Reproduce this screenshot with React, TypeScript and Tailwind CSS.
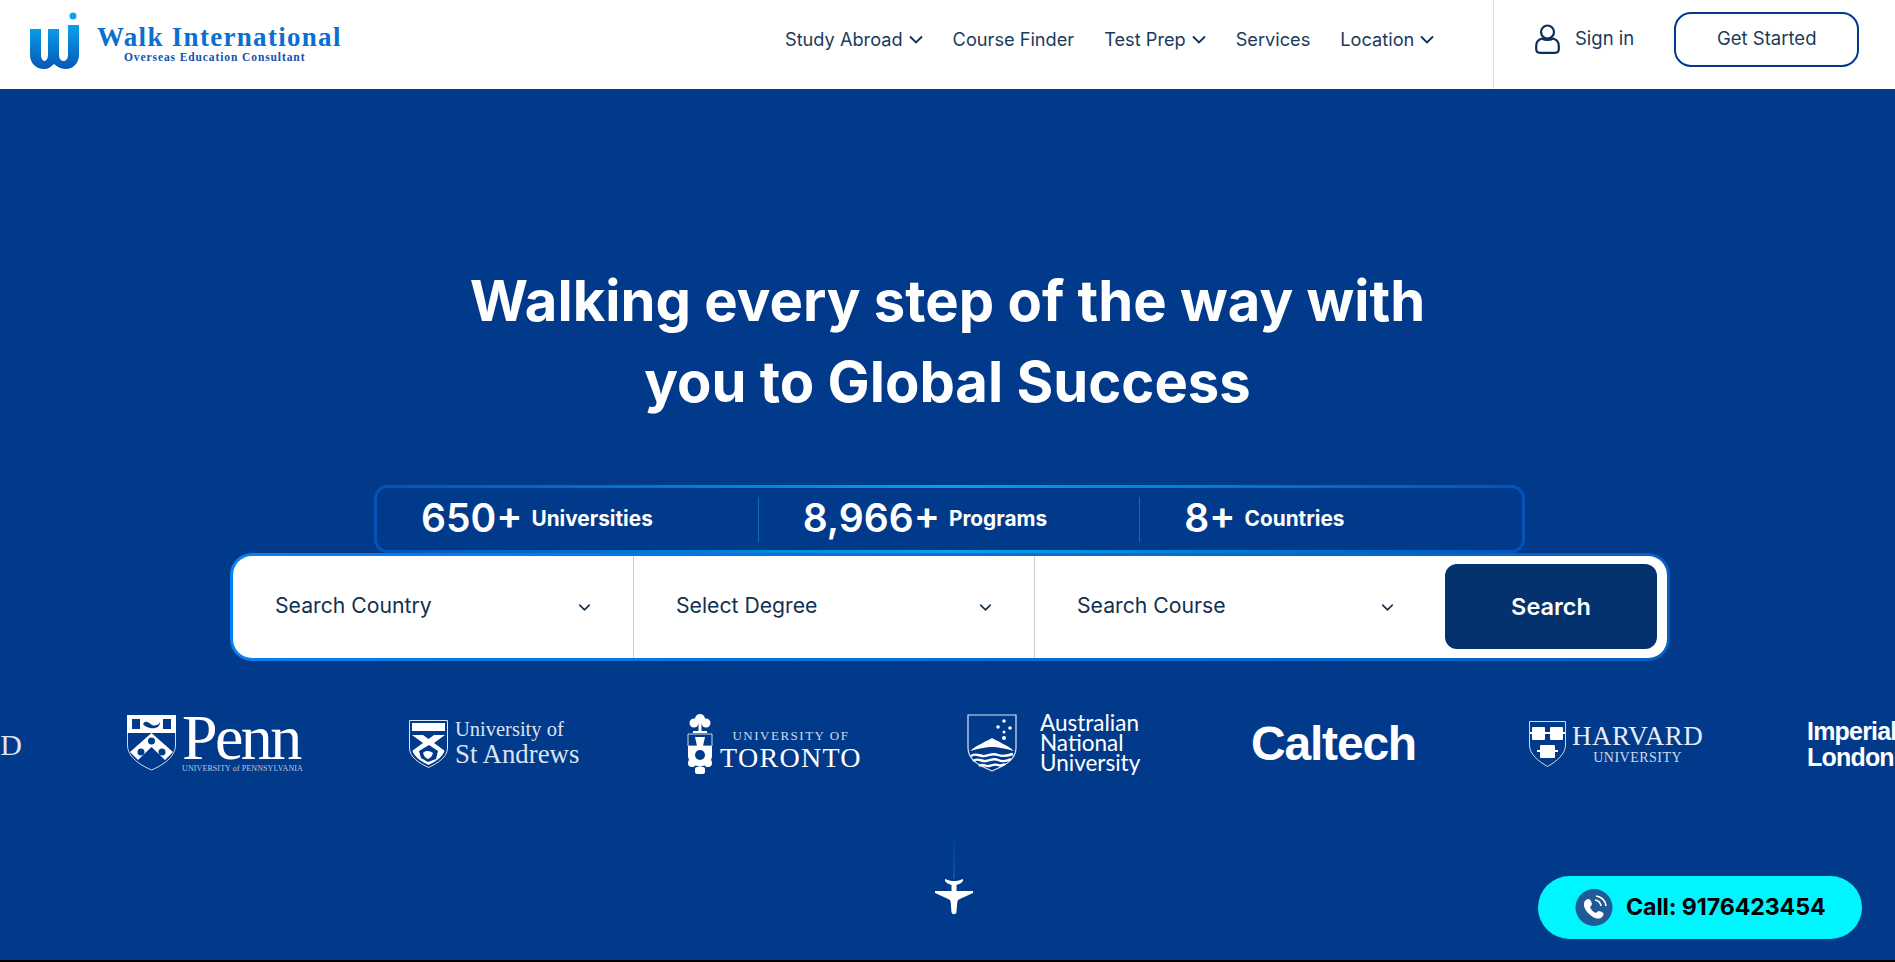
import React from "react";
import { ChevronDown } from "lucide-react";

const sans = "font-['Inter','Liberation_Sans',sans-serif]";
const serif = "font-['Liberation_Serif',serif]";

function NavItem({ label, chevron }: { label: string; chevron?: boolean }) {
  return (
    <div className="flex items-center gap-[6px] text-[18.2px] leading-6 text-[#1b3a5c] whitespace-nowrap">
      <span>{label}</span>
      {chevron && (
        <svg width="14" height="9" viewBox="0 0 14 9" fill="none" stroke="#0f2f52" strokeWidth="1.800" className="mt-[2px]">
          <path d="M1 1.500L7 7.500L13 1.500" />
        </svg>
      )}
    </div>
  );
}

function Selector({ label, border }: { label: string; border?: boolean }) {
  return (
    <div className={`w-[401px] h-full flex items-center justify-between pb-[2px] pl-[42px] pr-[39px] ${border ? "border-r border-[#c5d0dc]" : ""}`}>
      <span className="text-[21.200px] text-[#12304f]">{label}</span>
      <ChevronDown className="w-[19px] h-[19px] text-[#12304f] mt-[2px]" />
    </div>
  );
}

function Stat({ n, label, divider }: { n: string; label: string; divider?: boolean }) {
  return (
    <div className={`w-[382px] h-[45px] flex items-center gap-[9px] pl-[44px] ${divider ? "border-r border-[#0a6fc0]" : ""}`}>
      <span className="text-[39px] font-semibold text-white leading-none mb-[3px]">{n}</span>
      <span className="text-[20.800px] font-bold text-white leading-none">{label}</span>
    </div>
  );
}

function LogoCell({ children }: { children: React.ReactNode }) {
  return <div className="w-[280px] shrink-0 h-[80px] flex items-center text-white">{children}</div>;
}

function Penn() {
  return (
    <div className="flex items-start gap-[6px]">
      <svg width="49" height="56" viewBox="0 0 49 56">
        <path d="M0.5 0.5H48.5V30C48.5 42 36 50 24.500 55C13 50 0.500 42 0.500 30Z" fill="none" stroke="#cfd9ea" strokeWidth="1" />
        <path d="M0 0H49V18H0Z" fill="#fff" />
        <rect x="5" y="4" width="8" height="10" fill="#013a8a" />
        <rect x="36" y="4" width="8" height="10" fill="#013a8a" />
        <path d="M16 9c3-5 7 0 9 1s6 1 8-3c0 6-6 7-10 6s-5-2-7-4z" fill="#013a8a" />
        <path d="M3 37L24.500 18L46 37L38 45L24.500 32L11 45Z" fill="#fff" />
        <circle cx="24.500" cy="26" r="3.500" fill="#013a8a" />
        <circle cx="14" cy="37" r="3.500" fill="#013a8a" />
        <circle cx="35" cy="37" r="3.500" fill="#013a8a" />
      </svg>
      <div className={`${serif} flex flex-col`}>
        <span className="text-[64px] leading-[46px] tracking-[-2.600px] h-[46px]">Penn</span>
        <span className="text-[8px] leading-[10px] mt-[3px] tracking-[0.100px] text-[#b9c8e0] whitespace-nowrap">UNIVERSITY of PENNSYLVANIA</span>
      </div>
    </div>
  );
}

function StAndrews() {
  return (
    <div className="flex items-center gap-[7px] ml-[2px]">
      <svg width="39" height="48" viewBox="0 0 39 48">
        <path d="M0.500 0.500H38.500V28C38.500 37 29 43 19.500 47.500C10 43 0.500 37 0.500 28Z" fill="none" stroke="#dfe7f3" />
        <path d="M3 3H36V28C36 35 28 41 19.500 45C11 41 3 35 3 28Z" fill="#fff" />
        <rect x="3" y="11" width="33" height="4" fill="#013a8a" />
        <path d="M3 15L14 23L3 31ZM36 15L25 23L36 31ZM14 15H25L19.500 19Z" fill="#013a8a" />
        <path d="M10 31l10-6l9 6l-2 8l-8 3l-7-4Z" fill="#013a8a" />
        <path d="M14 33c3-3 7-2 10 0c-1 3-2 5-5 6c-3-1-4-3-5-6Z" fill="#fff" />
      </svg>
      <div className={`${serif} text-[#dbe4f1] flex flex-col mb-[4px]`}>
        <span className="text-[20.500px] leading-[24px] whitespace-nowrap">University of</span>
        <span className="text-[26.800px] leading-[26px] whitespace-nowrap">St Andrews</span>
      </div>
    </div>
  );
}

function Toronto() {
  return (
    <div className="flex items-end gap-[5px]">
      <svg width="28" height="62" viewBox="0 0 28 62">
        <circle cx="13" cy="6" r="5" fill="#fff" />
        <circle cx="7" cy="10" r="4.500" fill="#fff" />
        <circle cx="19" cy="10" r="4.500" fill="#fff" />
        <rect x="11.500" y="10" width="3" height="10" fill="#fff" />
        <rect x="6" y="18" width="14" height="2" fill="#fff" />
        <path d="M1 21H25V33H1Z" fill="none" stroke="#cdd9ea" />
        <path d="M8 24H18L16 33H10Z" fill="#fff" />
        <path d="M1 33H25V43C25 48 20 52 13 54C6 52 1 48 1 43Z" fill="#fff" />
        <circle cx="13" cy="42" r="5" fill="#013a8a" />
        <circle cx="5" cy="50" r="4" fill="#fff" />
        <circle cx="21" cy="50" r="4" fill="#fff" />
        <rect x="8" y="54" width="10" height="7" rx="2" fill="#fff" />
      </svg>
      <div className={`${serif} flex flex-col items-center mb-[2px]`}>
        <span className="text-[13px] leading-[14px] tracking-[1.500px] text-[#cfdaea] whitespace-nowrap">UNIVERSITY OF</span>
        <span className="text-[28px] leading-[30px] tracking-[1.300px] whitespace-nowrap">TORONTO</span>
      </div>
    </div>
  );
}

function Anu() {
  return (
    <div className="flex items-center gap-[23px] mb-[3px]">
      <svg width="50" height="58" viewBox="0 0 50 58">
        <path d="M1 1H49V34C49 46 37 52 25 57C13 52 1 46 1 34Z" fill="none" stroke="#dfe7f3" strokeWidth="1.200" />
        <path d="M3 37C10 31 20 27 25 24C30 27 40 31 47 37C40 35 30 33 25 33C20 33 10 35 3 37Z" fill="#fff" />
        <path d="M4 42c5-4 9 1 14 0s8-3 13-1s9 1 15-1M6 47c5-4 8 1 13 0s8-3 12-1s9 1 13-1M12 52c4-3 6 1 10 0s7-2 9-1s5 0 7-1" fill="none" stroke="#fff" strokeWidth="2.400" />
        <circle cx="37" cy="7" r="1.800" fill="#fff" />
        <circle cx="31" cy="13" r="1.800" fill="#fff" />
        <circle cx="43" cy="14" r="1.800" fill="#fff" />
        <circle cx="37" cy="18" r="1.500" fill="#fff" />
        <circle cx="37" cy="24" r="2" fill="#fff" />
      </svg>
      <div className="font-['Lato',sans-serif] text-[22.500px] leading-[20px] flex flex-col whitespace-nowrap">
        <span>Australian</span>
        <span>National</span>
        <span>University</span>
      </div>
    </div>
  );
}

function Harvard() {
  return (
    <div className="flex items-center gap-[6px] ml-[2px] mb-[1px]">
      <svg width="37" height="46" viewBox="0 0 37 46">
        <path d="M0.500 0.500H36.500V24C36.500 33 28 40 18.500 45.500C9 40 0.500 33 0.500 24Z" fill="none" stroke="#cfdaea" />
        <rect x="3" y="6" width="13" height="13" rx="1" fill="#fff" />
        <rect x="21" y="6" width="13" height="13" rx="1" fill="#fff" />
        <rect x="11" y="24" width="15" height="13" rx="1" fill="#fff" />
        <rect x="1" y="11" width="35" height="2" fill="#fff" />
        <rect x="8" y="29" width="21" height="2" fill="#fff" />
      </svg>
      <div className={`${serif} flex flex-col items-center`}>
        <span className="text-[27px] leading-[28px] tracking-[0.500px] text-[#e6ecf5] whitespace-nowrap">HARVARD</span>
        <span className="text-[14px] leading-[16px] tracking-[0.500px] text-[#cfdaea] whitespace-nowrap">UNIVERSITY</span>
      </div>
    </div>
  );
}

export default function App() {
  return (
    <div className={`${sans} w-[1895px] h-[962px] overflow-hidden bg-black relative`}>
      <header className="h-[89px] bg-white flex items-center">
        <div className="w-[785px] pl-[30px] flex items-center gap-[17px] shrink-0">
          <svg width="50" height="58" viewBox="0 0 50 58" className="mb-[9px] shrink-0">
            <defs>
              <linearGradient id="wg" x1="0" y1="0" x2="0" y2="1">
                <stop offset="0" stopColor="#0aa2ea" />
                <stop offset="1" stopColor="#0558b8" />
              </linearGradient>
            </defs>
            <circle cx="43" cy="5" r="3.500" fill="#0aa2ea" />
            <path d="M0 18H11V43C11 48 13 50 14.500 50C16 50 18 48 18 43V18H29V43C29 48 31 50 33.500 50C36 50 38 48 38 43V14H49V44C49 52 43 58 36 58C32 58 27 56 24 53C21 56 18 58 14 58C6 58 0 52 0 44Z" fill="url(#wg)" />
          </svg>
          <div className={`${serif} font-bold flex flex-col items-start mb-[4px]`}>
            <span className="text-[27px] leading-[28px] text-[#0a6fd0] tracking-[1.300px] whitespace-nowrap">Walk International</span>
            <span className="text-[11.500px] leading-[12px] text-[#1450b0] ml-[27px] tracking-[0.900px] whitespace-nowrap">Overseas Education Consultant</span>
          </div>
        </div>
        <nav className="flex items-center gap-[30px] w-[708px] shrink-0 h-full pb-[12px]">
          <NavItem label="Study Abroad" chevron />
          <NavItem label="Course Finder" />
          <NavItem label="Test Prep" chevron />
          <NavItem label="Services" />
          <NavItem label="Location" chevron />
        </nav>
        <div className="flex-1 h-full border-l border-[#dddddd] flex items-center pl-[41px] pb-[11px]">
          <svg width="25" height="30" viewBox="0 0 25 30" fill="none" stroke="#0b2f5c" strokeWidth="2.200" className="shrink-0">
            <circle cx="12.500" cy="8" r="6.500" />
            <path d="M7 14.500C3.500 15.500 1.200 18 1.200 22V25C1.200 27.500 3 28.800 5 28.800H20C22 28.800 23.800 27.500 23.800 25V22C23.800 18 21.500 15.500 18 14.500C15 16.500 10 16.500 7 14.500Z" />
          </svg>
          <span className="ml-[15px] text-[18.500px] text-[#1b3a5c]">Sign in</span>
          <button className="ml-[40px] w-[185px] h-[55px] rounded-[17px] border-2 border-[#003a8c] text-[18.500px] text-[#1b3a5c] bg-white">Get Started</button>
        </div>
      </header>

      <main className="h-[871px] bg-[#013a8a] relative flex flex-col overflow-hidden">
        <h1 className="pt-[172px] text-center text-[56.200px] leading-[81px] font-bold text-white">
          Walking every step of the way with
          <br />
          you to Global Success
        </h1>
        <div className="mt-[62px] ml-[374px] w-[1151px] h-[68px] rounded-[14px] p-[3px] bg-gradient-to-r from-[#0453b8] via-[#0aa0e8] to-[#0453b8]">
          <div className="w-full h-full rounded-[11px] bg-[#013a8a] flex items-center">
            <Stat n="650+" label="Universities" divider />
            <Stat n="8,966+" label="Programs" divider />
            <Stat n="8+" label="Countries" />
          </div>
        </div>
        <div className="ml-[230px] w-[1440px] h-[108px] rounded-[22px] p-[3px] bg-gradient-to-r from-[#0a80f0] to-[#0560c0]">
          <div className="w-full h-full rounded-[19px] bg-white flex items-center">
            <Selector label="Search Country" border />
            <Selector label="Select Degree" border />
            <Selector label="Search Course" />
            <button className="ml-[9px] mb-[1px] w-[212px] h-[85px] rounded-[12px] bg-[#03326f] text-white text-[23.500px] font-semibold">Search</button>
          </div>
        </div>
        <div className="mt-[43px] h-[80px] -ml-[153px] flex">
          <LogoCell>
            <div className={`${serif} text-[30px] w-full text-right pr-[105px] text-[#dbe4f1]`}>D</div>
          </LogoCell>
          <LogoCell><Penn /></LogoCell>
          <LogoCell><StAndrews /></LogoCell>
          <LogoCell><Toronto /></LogoCell>
          <LogoCell><Anu /></LogoCell>
          <LogoCell>
            <span className="ml-[4px] font-['Liberation_Sans',sans-serif] font-bold text-[48px] tracking-[-1.200px]">Caltech</span>
          </LogoCell>
          <LogoCell><Harvard /></LogoCell>
          <LogoCell>
            <div className="font-['Liberation_Sans',sans-serif] font-bold text-[25px] leading-[26px] tracking-[-0.800px]">Imperial College<br />London</div>
          </LogoCell>
        </div>
        <div className="mt-[50px] flex flex-col items-center w-[1895px] pl-[13px]">
          <div className="w-[2px] h-[45px] bg-gradient-to-b from-[#013a8a] to-[#0a56ad]" />
          <svg width="38" height="36" viewBox="0 0 38 36">
            <path d="M10 0C13 1 16 2 17 2H21C22 2 25 1 28 0V2C27 4 24 5 21.500 6V12L38 12V14C34 16 28 18 23 21C22 23 22 28 21.500 33C21 36 17 36 16.500 33C16 28 16 23 15 21C10 18 4 16 0 14V12L16.500 12V6C14 5 11 4 10 2Z" fill="#fff" />
          </svg>
        </div>
        <div className="absolute left-[1538px] top-[787px] w-[324px] h-[63px] rounded-full bg-[#00f6ff] flex items-center pl-[37px] gap-[13px]">
          <svg width="38" height="37" viewBox="0 0 38 37">
            <circle cx="19" cy="18.500" r="18.500" fill="#1e5a96" />
            <path d="M11 11c2-2 4-1 5 1l1 3c0 1-1 2-2 3c1 3 3 5 6 6c1-1 2-2 3-2l3 1c2 1 2 3 0 5c-2 2-5 2-9 0c-5-3-8-7-9-11c0-3 0-5 2-6Z" fill="#fff" />
            <path d="M20 11a7 7 0 0 1 6 6M21 7a11 11 0 0 1 10 10" fill="none" stroke="#fff" strokeWidth="1.600" />
          </svg>
          <span className="font-['Inter',sans-serif] text-[23.200px] font-bold text-black tracking-[-0.100px] whitespace-nowrap">Call: 9176423454</span>
        </div>
      </main>
    </div>
  );
}
